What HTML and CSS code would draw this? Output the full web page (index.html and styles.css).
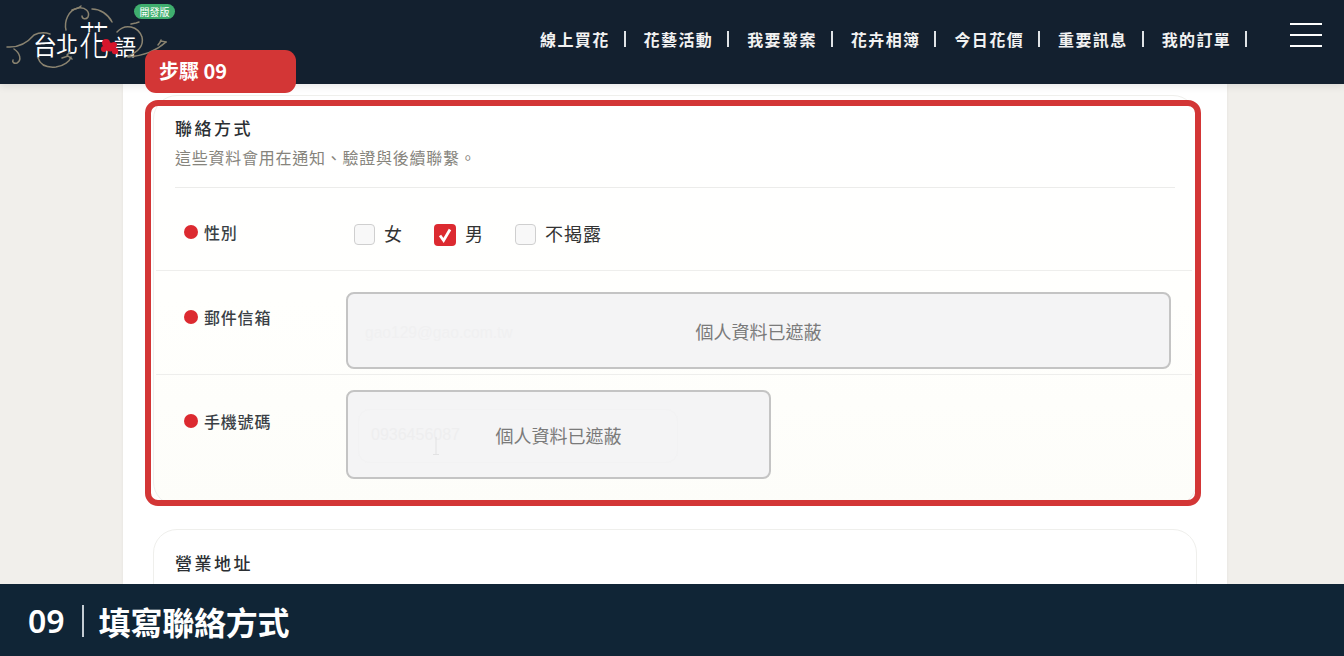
FILE: index.html
```html
<!DOCTYPE html>
<html lang="zh-Hant">
<head>
<meta charset="utf-8">
<title>填寫聯絡方式</title>
<link rel="stylesheet" href="styles.css">
</head>
<body>
<div class="page">
  <header class="topbar">
    <a class="logo">
      <span class="logo-text"><span class="lg-a">台</span><span class="lg-b">北</span><span class="lg-c">花</span><span class="lg-d">語</span></span>
      <svg class="logo-art" viewBox="0 0 176 76" aria-hidden="true">
        <g fill="none" stroke="#8a8370" stroke-width="1.5" stroke-linecap="round">
          <path d="M7 47C20 48 28 42 34 35 38 33 44 32 50 34"/>
          <path d="M14 49C20 53 22 60 17 63 14 64 12 62 13 60"/>
          <path d="M38 58C40 64 46 68 56 67 64 66 70 61 71 57"/>
          <path d="M62 58l6-2 4 3M67 55l3-3"/>
          <path d="M66 30C64 22 68 10 78 8 86 7 90 12 88 17 86 20 82 19 82 16"/>
          <path d="M72 10l6-2 3-2M92 9C100 9 108 14 112 22"/>
          <path d="M117 32C125 23 138 26 142 37 144 46 138 52 128 56"/>
          <path d="M131 24l5-1 3-1M128 57C142 56 156 51 166 42"/>
          <path d="M158 45l3-4 5 1M160 42l1-2"/>
        </g>
        <g fill="#d6162c">
          <circle cx="106" cy="43" r="4"/><circle cx="110" cy="47" r="4.5"/>
          <circle cx="104" cy="49" r="3"/><circle cx="114" cy="45" r="3"/><circle cx="115" cy="51" r="3.2"/>
        </g>
      </svg>
      <span class="dev-badge">開發版</span>
    </a>
    <nav class="nav">
      <a>線上買花</a><i></i>
      <a>花藝活動</a><i></i>
      <a>我要發案</a><i></i>
      <a>花卉相簿</a><i></i>
      <a>今日花價</a><i></i>
      <a>重要訊息</a><i></i>
      <a>我的訂單</a><i></i>
    </nav>
    <button class="burger" aria-label="選單"><span></span><span></span><span></span></button>
  </header>

  <main class="stage">
    <div class="sheet">
      <section class="card">
        <div class="card-head">
          <h2>聯絡方式</h2>
          <p>這些資料會用在通知、驗證與後續聯繫。</p>
        </div>
        <div class="row row-gender">
          <div class="label">性別</div>
          <div class="options">
            <span class="opt"><b class="box"></b>女</span>
            <span class="opt"><b class="box on"><svg viewBox="0 0 22 22"><path d="M6 11.5l3.6 5L16 5.5" fill="none" stroke="#fff" stroke-width="2.8"/></svg></b>男</span>
            <span class="opt"><b class="box"></b>不揭露</span>
          </div>
        </div>
        <div class="row row-mail">
          <div class="label">郵件信箱</div>
          <div class="mask-field wide">
            <span class="ghost">gao129@gao.com.tw</span>
            <span class="mask">個人資料已遮蔽</span>
          </div>
        </div>
        <div class="row row-phone">
          <div class="label">手機號碼</div>
          <div class="mask-field narrow">
            <span class="ghost-box">0936456087</span>
            <svg class="ibeam" viewBox="0 0 8 20" aria-hidden="true"><path d="M4 1v17M1 18.500h6" fill="none" stroke="#e2e2e3" stroke-width="1"/></svg>
            <span class="mask">個人資料已遮蔽</span>
          </div>
        </div>
      </section>
      <section class="card second">
        <div class="card-head">
          <h2>營業地址</h2>
        </div>
      </section>
      <div class="highlight"></div>
    </div>
    <div class="step-tag">步驟 09</div>
  </main>

  <footer class="caption">
    <span class="cap-num">09</span>
    <span class="cap-title">填寫聯絡方式</span>
  </footer>
</div>
</body>
</html>
```
FILE: styles.css
```css
* { box-sizing: border-box; }
html, body { margin: 0; padding: 0; }
body { font-family: "Noto Sans CJK TC", "Noto Sans", sans-serif; color: #333; }

.page { width: 1344px; height: 656px; display: flex; flex-direction: column; overflow: hidden; background: #f1efeb; }

.topbar { position: relative; z-index: 3; flex: 0 0 84px; display: flex; align-items: center; background: #13202f; box-shadow: 0 2px 8px rgba(0,0,0,.1); }

.logo { position: relative; flex: 0 0 190px; height: 84px; }
.logo-art { position: absolute; left: 0; top: 0; width: 176px; height: 76px; }
.logo-text { position: absolute; left: 0; top: 0; width: 176px; height: 76px; color: #fff; font-weight: 400; }
.logo-text span { position: absolute; line-height: 1; }
.lg-a { left: 33px; top: 33px; font-size: 24px; }
.lg-b { left: 56px; top: 31px; font-size: 22px; }
.lg-c { left: 79px; top: 18px; font-size: 30px; font-weight: 300; transform: scaleY(1.32); transform-origin: top; }
.lg-d { left: 114px; top: 34px; font-size: 22px; }
.dev-badge { position: absolute; left: 134px; top: 4px; width: 41px; height: 15px; border-radius: 8px; background: #3fae6e; color: #fff; font-size: 10px; line-height: 15px; text-align: center; }

.nav { margin-left: 350px; margin-bottom: 6px; display: flex; align-items: center; }
.nav a { color: #f2f2f2; font-size: 16px; font-weight: 700; letter-spacing: 1.4px; line-height: 24px; white-space: nowrap; }
.nav i { width: 2px; height: 16px; margin: 0 18px 0 14px; background: #dfe3e6; }
.nav i:last-child { margin-right: 0; }

.burger { margin-left: 43px; margin-bottom: 14px; width: 32px; height: 24px; padding: 0; border: 0; background: none; display: flex; flex-direction: column; justify-content: space-between; }
.burger span { display: block; height: 2px; background: #fff; }

.stage { position: relative; flex: 1 1 auto; min-height: 0; overflow: visible; }
.sheet { position: relative; width: 1104px; height: 100%; margin-left: 123px; padding: 11px 30px 0; background: #fff; box-shadow: 0 0 3px rgba(0,0,0,.06); overflow: hidden; }

.card { border: 1px solid #efefec; border-radius: 24px; background: linear-gradient(180deg, #fff 0%, #fffffd 50%, #fdfdf9 100%); height: 411px; }
.card.second { height: 120px; margin-top: 23px; background: #fff; }

.card-head { margin: 0 21px; padding-top: 20px; height: 92px; border-bottom: 1px solid #ececea; }
.second .card-head { border-bottom: 0; padding-top: 21px; }
.card-head h2 { margin: 0; font-size: 17px; font-weight: 500; letter-spacing: 2.5px; line-height: 24px; color: #2b2f33; }
.card-head p { margin: 5px 0 0; font-size: 16px; letter-spacing: .75px; line-height: 24px; color: #86847c; }

.row { display: grid; grid-template-columns: 162px 1fr; margin: 0 4px 0 2px; padding: 0 21px 0 28px; border-bottom: 1px solid #eeeeec; }
.row:last-child { border-bottom: 0; }
.row-gender { height: 83px; padding-top: 32px; }
.row-mail { height: 104px; padding-top: 21px; }
.row-phone { padding-top: 15px; }

.label { display: flex; align-items: center; height: 24px; font-size: 16px; font-weight: 500; letter-spacing: .8px; color: #3a3f45; }
.label::before { content: ""; flex: 0 0 14px; width: 14px; height: 14px; margin-right: 6px; border-radius: 50%; background: #dc2a30; }
.row-mail .label { margin-top: 13px; }
.row-phone .label { margin-top: 19px; }

.options { display: flex; gap: 31px; height: 26px; padding-left: 8px; padding-top: 3px; align-items: center; }
.opt { display: flex; align-items: center; font-size: 18px; letter-spacing: 1px; line-height: 24px; color: #333; margin-top: -3px; }
.box { flex: 0 0 21px; width: 21px; height: 21px; margin-right: 9px; margin-top: 3px; border: 1px solid #cfcfcf; border-radius: 4px; background: #f8f8f8; }
.box.on { width: 22px; flex-basis: 22px; height: 22px; border: 0; background: #dc2a30; }
.box.on svg { display: block; width: 22px; height: 22px; }

.mask-field { position: relative; display: flex; align-items: center; justify-content: center; padding-top: 1px; border: 2px solid #c4c4c4; border-radius: 8px; background: #f4f4f5; }
.wide { width: 825px; height: 77px; }
.narrow { width: 425px; height: 89px; }
.mask { font-size: 18px; line-height: 26px; color: #7a7a7a; }
.ghost { position: absolute; left: 17px; top: 28px; font-family: "Liberation Sans", sans-serif; font-size: 15.6px; line-height: 22px; color: #f0f0f1; }
.ghost-box { position: absolute; left: 10px; top: 17px; width: 320px; height: 54px; padding: 14px 12px; border: 1px solid #f2f2f3; border-radius: 12px; font-family: "Liberation Sans", sans-serif; font-size: 16px; line-height: 22px; color: #eeeeef; }
.ibeam { position: absolute; left: 84px; top: 44px; width: 8px; height: 20px; }

.highlight { position: absolute; left: 22px; top: 16px; width: 1056px; height: 406px; border: 6px solid #d33636; border-radius: 13px; pointer-events: none; }

.step-tag { position: absolute; z-index: 4; left: 145px; top: -34px; width: 151px; height: 43px; padding-left: 14px; border-radius: 11px; background: #d33636; color: #fff; font-size: 20px; font-weight: 700; line-height: 42px; }

.caption { position: relative; z-index: 3; flex: 0 0 72px; display: flex; align-items: center; padding: 2px 0 0 28px; background: #102536; color: #fff; }
.cap-num { padding-right: 17px; border-right: 2px solid #c4ccd3; height: 32px; font-family: "Noto Sans", sans-serif; font-size: 32px; font-weight: 600; line-height: 32px; }
.cap-title { margin-left: 15px; font-size: 32px; font-weight: 700; letter-spacing: -.2px; line-height: 40px; }
```
